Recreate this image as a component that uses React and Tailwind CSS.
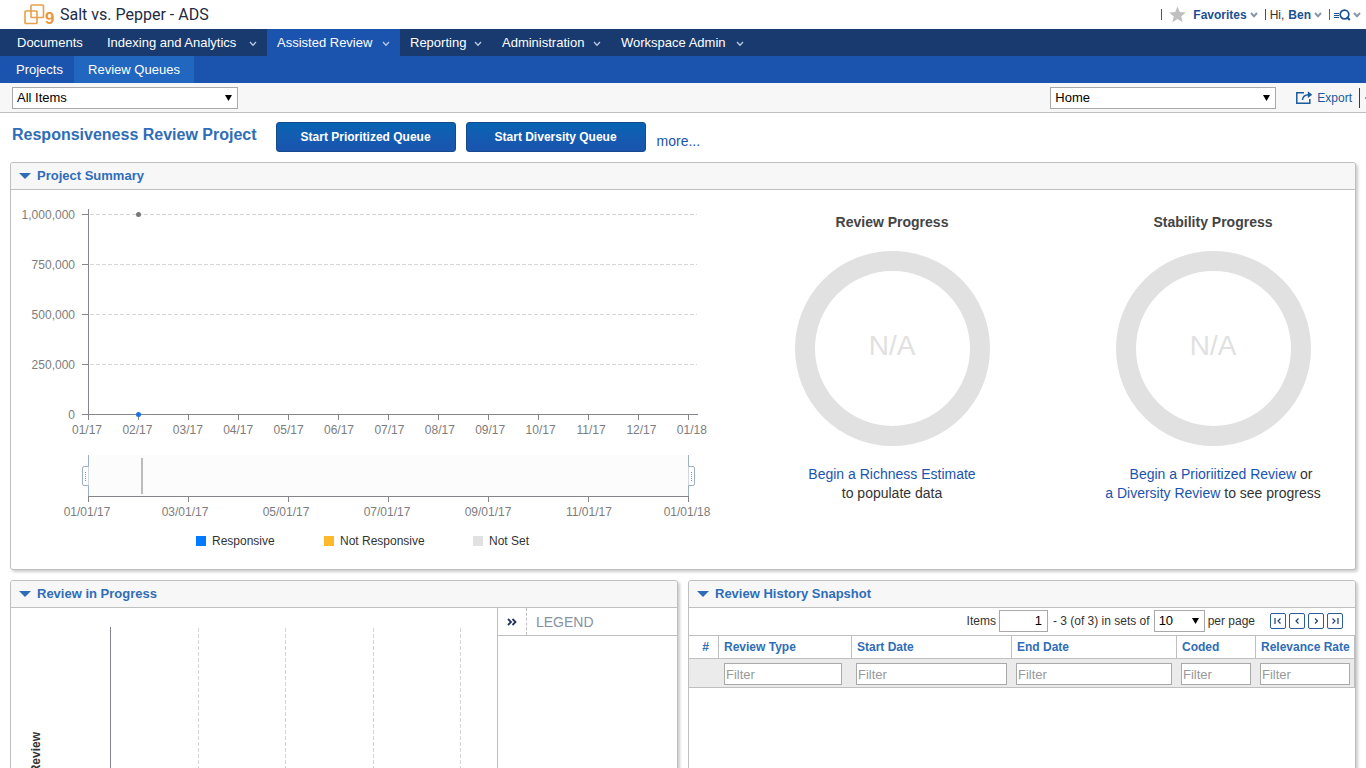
// src/pages/ReviewQueues.jsx
import React from 'react';

const navItems = [
  { label: 'Documents', width: 'w-[90px]', menu: false },
  { label: 'Indexing and Analytics', width: 'w-[170px]', menu: true },
  { label: 'Assisted Review', width: 'w-[133px]', menu: true, active: true },
  { label: 'Reporting', width: 'w-[92px]', menu: true },
  { label: 'Administration', width: 'w-[119px]', menu: true },
  { label: 'Workspace Admin', width: 'w-[143px]', menu: true },
];

const yTicks = [
  { label: '1,000,000', y: 214 },
  { label: '750,000', y: 264 },
  { label: '500,000', y: 314 },
  { label: '250,000', y: 364 },
  { label: '0', y: 414 },
];

const months = [
  '01/17', '02/17', '03/17', '04/17', '05/17', '06/17', '07/17',
  '08/17', '09/17', '10/17', '11/17', '12/17', '01/18',
];

const rangeTicks = [
  { label: '01/01/17', x: 87 },
  { label: '03/01/17', x: 185 },
  { label: '05/01/17', x: 286 },
  { label: '07/01/17', x: 387 },
  { label: '09/01/17', x: 488 },
  { label: '11/01/17', x: 589 },
  { label: '01/01/18', x: 687 },
];

const columns = [
  { label: 'Review Type', width: 'w-[133px]', pad: 'pl-[5px] pr-[10px]' },
  { label: 'Start Date', width: 'w-[160px]', pad: 'pl-1 pr-[5px]' },
  { label: 'End Date', width: 'w-[165px]', pad: 'pl-1 pr-[5px]' },
  { label: 'Coded', width: 'w-[79px]', pad: 'pl-1 pr-[5px]' },
  { label: 'Relevance Rate', width: 'w-[99px]', pad: 'px-1' },
];

const Chevron = ({ className, strokeWidth = 1.3 }) => (
  <svg className={className} width="8" height="6" viewBox="0 0 8 6" fill="none" stroke="currentColor" strokeWidth={strokeWidth}>
    <path d="M1 1l3 3.2L7 1" />
  </svg>
);

const Select = ({ label, value, className }) => (
  <div className={`relative shrink-0 ${className}`}>
    <select
      aria-label={label}
      defaultValue={value}
      className="block h-[22px] w-full appearance-none border border-[#a9a9a9] bg-white pl-1 text-[13px] leading-5 text-black"
    >
      <option>{value}</option>
    </select>
    <svg className="pointer-events-none absolute top-2 right-[6px]" width="7" height="6" viewBox="0 0 7 6">
      <path d="M0 0h7L3.5 6z" fill="#000" />
    </svg>
  </div>
);

const Panel = ({ title, className = '', children }) => (
  <section className={`flex flex-col rounded-[3px] border border-[#bfbfbf] bg-white shadow-[2px_2px_3px_rgba(0,0,0,0.2)] ${className}`}>
    <header className="flex h-[27px] shrink-0 items-center rounded-t-[3px] border-b border-[#bfbfbf] bg-[#f7f7f7] pl-2">
      <svg width="12" height="6" viewBox="0 0 12 6">
        <path d="M0 0h12L6 6z" fill="#2f6db8" />
      </svg>
      <h2 className="ml-[6px] text-[13px] leading-4 font-bold text-[#2f6db8]">{title}</h2>
    </header>
    {children}
  </section>
);

const Header = () => (
  <header className="flex h-[29px] items-center justify-between pr-[5px] pl-6">
    <div className="flex items-center">
      <svg className="overflow-visible" width="32" height="21" viewBox="0 0 32 21" fill="none" stroke="#e8a04a" strokeWidth="1.6">
        <rect x="1" y="7" width="12" height="12.500" rx="0.8" />
        <rect x="7" y="1" width="12.500" height="12.500" rx="0.8" />
        <text x="21" y="20" fill="#e8983a" stroke="none" fontSize="17" fontWeight="bold">9</text>
      </svg>
      <h1 className="ml-1 font-[Roboto,Arial,sans-serif] text-[16px] leading-5 text-[#1f2a44]">Salt vs. Pepper - ADS</h1>
    </div>
    <div className="flex items-center text-[12px] leading-4 text-[#1c4f91]">
      <span className="h-[11px] w-px bg-[#8a2f8f]" />
      <svg className="ml-[7px]" width="17" height="17" viewBox="0 0 17 17">
        <path d="M8.500 0.500l2.300 5.600 6 .4-4.600 3.900 1.500 5.900-5.200-3.200-5.200 3.200 1.500-5.900L.2 6.500l6-.4z" fill="#c0c0c0" />
      </svg>
      <a href="#favorites" className="ml-[7px] flex items-center font-bold">
        Favorites
        <Chevron className="ml-[3px] text-[#8796ab]" strokeWidth={2} />
      </a>
      <span className="ml-[7px] h-[11px] w-px bg-[#6b4a33]" />
      <span className="ml-1 text-[#333]">Hi,</span>
      <a href="#user" className="ml-1 flex items-center font-bold">
        Ben
        <Chevron className="ml-[3px] text-[#8796ab]" strokeWidth={2} />
      </a>
      <span className="ml-[7px] h-[11px] w-px bg-[#5c6b2f]" />
      <button aria-label="Search" className="ml-1 flex items-center">
        <svg width="17" height="12" viewBox="0 0 17 12" fill="none" stroke="#1c4f91">
          <path d="M0 4.500h5M0 6.500h5M0 8.500h5" strokeWidth="1" />
          <circle cx="10.500" cy="5.500" r="4.300" strokeWidth="1.700" />
          <path d="M12.800 8l3 3" strokeWidth="2" />
        </svg>
        <Chevron className="ml-[2px] text-[#8796ab]" strokeWidth={2} />
      </button>
    </div>
  </header>
);

const Navigation = () => (
  <nav className="text-[13px] leading-4 text-white">
    <div className="flex h-[27px] bg-[#183a6f] pl-[7px]">
      {navItems.map((item) => (
        <a
          key={item.label}
          href="#nav"
          className={`flex shrink-0 items-center justify-between px-[10px] ${item.width} ${item.active ? 'bg-[#1b54ae]' : ''}`}
        >
          {item.label}
          {item.menu && <Chevron className="mt-[3px] text-[#b9cbe6]" />}
        </a>
      ))}
    </div>
    <div className="flex h-[27px] bg-[#1b54ae]">
      <a href="#projects" className="flex w-[74px] items-center pl-4">Projects</a>
      <a href="#queues" className="flex w-[120px] items-center justify-center bg-[#2166bf]">Review Queues</a>
    </div>
  </nav>
);

const Toolbar = () => (
  <div className="flex h-[30px] items-center overflow-hidden border-b border-[#bfbfbf] bg-[#f7f7f7] pl-3">
    <Select label="View" value="All Items" className="w-[226px]" />
    <Select label="Dashboard" value="Home" className="ml-auto w-[226px]" />
    <a href="#export" className="ml-5 flex items-center text-[12px] leading-4 text-[#1c5a9e]">
      <svg width="17" height="13" viewBox="0 0 17 13" fill="none" stroke="currentColor" strokeWidth="1.500">
        <path d="M8 1.800H.8v10.400h13V8" />
        <path d="M6.500 9c.2-3.500 2.200-5.300 6.300-5.300" />
        <path d="M11.800.3l4.500 3.400-4.500 3.300z" fill="currentColor" stroke="none" />
      </svg>
      <span className="ml-1">Export</span>
    </a>
    <span className="ml-[7px] h-5 w-px shrink-0 bg-[#1c3f6e]" />
    <span className="ml-[5px] h-[2px] w-px shrink-0 bg-[#8796ab]" />
  </div>
);

const SummaryChart = () => (
  <svg
    className="block text-[12px]"
    width="700"
    height="336"
    viewBox="11 190 700 336"
    fill="#7d7d7d"
    shapeRendering="crispEdges"
  >
    {yTicks.map((tick) => (
      <g key={tick.label}>
        {tick.y < 414 && (
          <path d={`M90 ${tick.y + 0.5}H697`} stroke="#d6d6d6" strokeDasharray="4 2" />
        )}
        <path d={`M82 ${tick.y + 0.5}h6`} stroke="#85858b" />
        <text x="75" y={tick.y + 5} textAnchor="end">{tick.label}</text>
      </g>
    ))}
    <path d="M88.500 209V419M82 414.500H698" stroke="#85858b" fill="none" />
    {months.map((month, i) => (
      <g key={month}>
        <path d={`M${88.5 + i * 50} 415v5`} stroke="#85858b" />
        <text x={87 + i * 50.4} y="434" textAnchor="middle">{month}</text>
      </g>
    ))}
    <g shapeRendering="auto">
      <circle cx="138.500" cy="214.500" r="2.500" fill="#777" />
      <circle cx="138.500" cy="414.500" r="2.500" fill="#1f6fe5" />
    </g>

    {/* Date range selector */}
    <rect x="89" y="455" width="599" height="41" fill="#fcfcfc" />
    <rect x="141" y="458" width="2" height="36" fill="#bdbdbd" />
    <path d="M88 496.500H689" stroke="#85858b" />
    {rangeTicks.map((tick, i) => (
      <g key={tick.label}>
        <path d={`M${88.5 + i * 100} 497v5`} stroke="#85858b" />
        <text x={tick.x} y="516" textAnchor="middle">{tick.label}</text>
      </g>
    ))}
    <path d="M88.500 455v41M688.500 455v41" stroke="#9fb0c6" />
    <g stroke="#9fb0c6" fill="#fff" shapeRendering="auto">
      <path d="M88.500 466.500h-4.500q-1.500 0-1.500 1.500v16q0 1.500 1.500 1.500h4.500" />
      <path d="M688.500 466.500h4.500q1.500 0 1.500 1.500v16q0 1.500-1.500 1.500h-4.500" />
      <path d="M85.500 472v9M691.500 472v9" strokeDasharray="1 1" stroke="#8a8f98" />
    </g>
  </svg>
);

const Legend = () => (
  <div className="flex h-[30px] items-center pl-[185px] text-[12px] leading-4 text-[#333]">
    <span className="flex w-32 items-center gap-[6px]"><i className="size-[10px] bg-[#007bff]" />Responsive</span>
    <span className="flex w-[149px] items-center gap-[6px]"><i className="size-[10px] bg-[#ffb92a]" />Not Responsive</span>
    <span className="flex items-center gap-[6px]"><i className="size-[10px] bg-[#e1e1e1]" />Not Set</span>
  </div>
);

const Gauge = ({ title, children }) => (
  <div className="flex w-[220px] flex-col items-center">
    <h3 className="text-[14px] leading-5 font-bold text-[#444]">{title}</h3>
    <div className="mt-[19px] flex size-[195px] items-center justify-center rounded-full border-[20px] border-[#e1e1e1] pb-[6px] text-[28px] leading-8 text-[#e1e1e1]">
      N/A
    </div>
    <div className="mt-[19px] text-center text-[14px] leading-[19px] whitespace-nowrap text-[#333]">{children}</div>
  </div>
);

const ReviewInProgress = () => (
  <div className="flex flex-1">
    <div className="min-w-0 flex-1">
      <svg className="block" width="480" height="200" viewBox="11 608 480 200" fill="none">
        <path d="M110.500 627V808" stroke="#85858b" />
        <path d="M198.500 628V808M285.500 628V808M373.500 628V808M460.500 628V808" stroke="#d6d6d6" strokeDasharray="4 2" />
        <text transform="translate(40 732) rotate(-90)" textAnchor="end" fill="#333" fontSize="12" fontWeight="bold">Review</text>
      </svg>
    </div>
    <aside className="w-[180px] border-l border-[#bfbfbf]">
      <div className="flex h-7 border-b border-[#bfbfbf]">
        <button aria-label="Collapse legend" className="flex w-[29px] items-center justify-center border-r border-dashed border-[#bfbfbf]">
          <svg width="10" height="8" viewBox="0 0 10 8" fill="none" stroke="#22355c" strokeWidth="1.800">
            <path d="M1 1l3 3-3 3M5.500 1l3 3-3 3" />
          </svg>
        </button>
        <span className="flex items-center pl-[9px] text-[14px] leading-4 text-[#8593a5]">LEGEND</span>
      </div>
    </aside>
  </div>
);

const PageButton = ({ label, path }) => (
  <button aria-label={label} className="flex size-4 items-center justify-center rounded-[2px] border border-[#2c5c99] bg-white">
    <svg width="10" height="8" viewBox="0 0 10 8" fill="none" stroke="#1c3f75" strokeWidth="1.200">
      <path d={path} />
    </svg>
  </button>
);

const ReviewHistory = () => (
  <div>
    <div className="flex h-[27px] items-center justify-end pr-3 pb-[2px] text-[12px] leading-4 text-[#333]">
      <label htmlFor="first-item">Items</label>
      <input
        id="first-item"
        defaultValue="1"
        className="ml-[3px] h-[22px] w-[49px] border border-[#a9a9a9] pr-[5px] text-right text-[13px] text-black"
      />
      <span className="ml-[5px]">- 3 (of 3) in sets of</span>
      <Select label="Items per page" value="10" className="ml-1 w-[51px]" />
      <span className="ml-[3px]">per page</span>
      <div className="ml-[15px] flex gap-[3px]">
        <PageButton label="First page" path="M2 1v6M7.500 1.500L5 4l2.500 2.500" />
        <PageButton label="Previous page" path="M6.500 1.500L4 4l2.500 2.500" />
        <PageButton label="Next page" path="M4 1.500L6.500 4 4 6.500" />
        <PageButton label="Last page" path="M2.500 1.500L5 4 2.500 6.500M8 1v6" />
      </div>
    </div>
    <table className="w-full table-fixed border-separate border-spacing-0 text-left text-[12px] leading-4 text-[#2f6db8]">
      <thead>
        <tr className="h-6">
          <th className="w-[30px] border-y border-r border-[#bfbfbf] pl-1 text-center">#</th>
          {columns.map((col) => (
            <th key={col.label} className={`border-y border-r border-[#bfbfbf] pl-[5px] whitespace-nowrap ${col.width}`}>
              {col.label}
            </th>
          ))}
        </tr>
      </thead>
      <tbody>
        <tr className="h-[29px] bg-[#ebebeb]">
          <td className="border-b border-[#bfbfbf]" />
          {columns.map((col) => (
            <td key={col.label} className={`border-b border-[#bfbfbf] pt-[2px] last:border-r ${col.pad}`}>
              <input
                aria-label={`Filter ${col.label}`}
                placeholder="Filter"
                className="block h-[22px] w-full border border-[#a9a9a9] bg-white pl-px text-[13px] text-black placeholder:text-[#999]"
              />
            </td>
          ))}
        </tr>
      </tbody>
    </table>
  </div>
);

const App = () => {
  return (
    <div className="h-screen overflow-hidden bg-white font-['Liberation_Sans',Arial,sans-serif]">
      <Header />
      <Navigation />
      <Toolbar />

      <main className="px-[10px]">
        {/* Project title and queue actions */}
        <div className="flex h-[49px] items-start pl-[2px]">
          <h2 className="mt-3 text-[16px] leading-5 font-bold text-[#2f6db8]">Responsiveness Review Project</h2>
          <div className="mt-[9px] ml-[19px] flex gap-[10px] text-[12px] leading-4 font-bold text-white">
            <button className="h-[30px] w-[180px] rounded-[3px] border border-[#154a8c] bg-linear-to-b from-[#0563b3] to-[#1b54ae]">
              Start Prioritized Queue
            </button>
            <button className="h-[30px] w-[180px] rounded-[3px] border border-[#154a8c] bg-linear-to-b from-[#0563b3] to-[#1b54ae]">
              Start Diversity Queue
            </button>
          </div>
          <a href="#more" className="mt-[18px] ml-[11px] text-[14px] leading-5 text-[#1b54ae]">more...</a>
        </div>

        <Panel title="Project Summary">
          <div className="flex justify-between pb-[13px]">
            <div>
              <SummaryChart />
              <Legend />
            </div>
            <div className="mr-8 flex gap-[101px] pt-[22px]">
              <Gauge title="Review Progress">
                <a href="#richness" className="text-[#1b54ae]">Begin a Richness Estimate</a>
                <p>to populate data</p>
              </Gauge>
              <Gauge title="Stability Progress">
                <p className="pl-4"><a href="#prioritized" className="text-[#1b54ae]">Begin a Prioriitized Review</a> or</p>
                <p><a href="#diversity" className="text-[#1b54ae]">a Diversity Review</a> to see progress</p>
              </Gauge>
            </div>
          </div>
        </Panel>

        <div className="mt-[10px] grid grid-cols-2 gap-[10px]">
          <Panel title="Review in Progress">
            <ReviewInProgress />
          </Panel>
          <Panel title="Review History Snapshot">
            <ReviewHistory />
          </Panel>
        </div>
      </main>
    </div>
  );
};

export default App;
